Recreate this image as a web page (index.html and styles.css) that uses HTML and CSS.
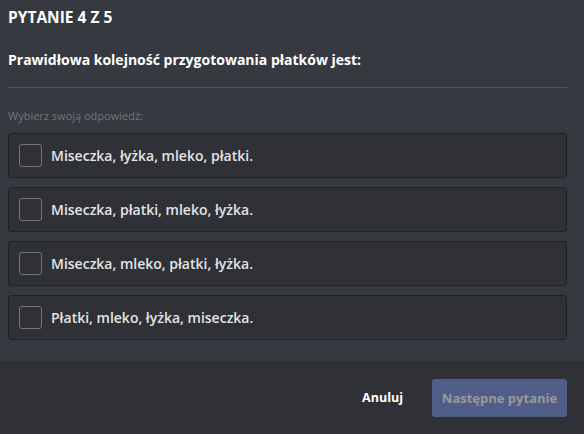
FILE: index.html
```html
<!DOCTYPE html>
<html lang="pl">
<head>
<meta charset="utf-8">
<link rel="stylesheet" href="styles.css">
</head>
<body>
<div class="modal">
  <div class="content">
    <h2 class="title">Pytanie 4 z 5</h2>
    <p class="question">Prawidłowa kolejność przygotowania płatków jest:</p>
    <div class="divider"></div>
    <div class="label">Wybierz swoją odpowiedź:</div>
    <div class="options">
      <div class="option"><span class="box"></span><span class="opt-text">Miseczka, łyżka, mleko, płatki.</span></div>
      <div class="option"><span class="box"></span><span class="opt-text">Miseczka, płatki, mleko, łyżka.</span></div>
      <div class="option"><span class="box"></span><span class="opt-text">Miseczka, mleko, płatki, łyżka.</span></div>
      <div class="option"><span class="box"></span><span class="opt-text">Płatki, mleko, łyżka, miseczka.</span></div>
    </div>
  </div>
  <div class="footer">
    <button class="btn-link">Anuluj</button>
    <button class="btn-primary" disabled>Następne pytanie</button>
  </div>
</div>
</body>
</html>
```
FILE: styles.css
```css
html, body {
  margin: 0;
  padding: 0;
  background: #36393f;
  height: 100%;
}
body {
  font-family: "Open Sans", "Noto Sans", sans-serif;
  color: #ffffff;
}
.modal {
  display: flex;
  flex-direction: column;
  height: 434px;
}
.content {
  padding: 7px 17px 21px 8px;
  flex: 1;
}
.title {
  margin: 0;
  font-size: 15.5px;
  font-weight: 700;
  text-transform: uppercase;
  line-height: 21px;
  color: #ffffff;
}
.question {
  margin: 22px 0 0;
  font-size: 14px;
  font-weight: 700;
  line-height: 20px;
  color: #ffffff;
}
.divider {
  height: 1px;
  background: #4f545c;
  margin-top: 17px;
}
.label {
  margin-top: 21px;
  font-size: 11px;
  line-height: 14px;
  color: #72767d;
}
.options {
  margin-top: 10px;
  display: flex;
  flex-direction: column;
  gap: 9px;
}
.option {
  height: 45px;
  box-sizing: border-box;
  background: #2f3136;
  border: 1px solid #202225;
  border-radius: 3px;
  display: flex;
  align-items: center;
  padding-left: 10px;
}
.box {
  width: 23px;
  height: 23px;
  box-sizing: border-box;
  border: 1px solid #72767d;
  border-radius: 3px;
  flex: none;
}
.opt-text {
  margin-left: 9px;
  font-size: 14px;
  font-weight: 600;
  color: #e3e4e6;
}
.footer {
  height: 73px;
  background: #2f3136;
  display: flex;
  align-items: center;
  justify-content: flex-end;
  padding-right: 17px;
  gap: 29px;
  flex: none;
}
.btn-link {
  background: none;
  border: none;
  font-family: inherit;
  font-size: 12.5px;
  font-weight: 700;
  color: #ffffff;
  padding: 0;
}
.btn-primary {
  width: 135px;
  height: 38px;
  border: none;
  border-radius: 3px;
  background: #7289da;
  opacity: 0.5;
  font-family: inherit;
  font-size: 13px;
  font-weight: 700;
  color: #ffffff;
}
```
